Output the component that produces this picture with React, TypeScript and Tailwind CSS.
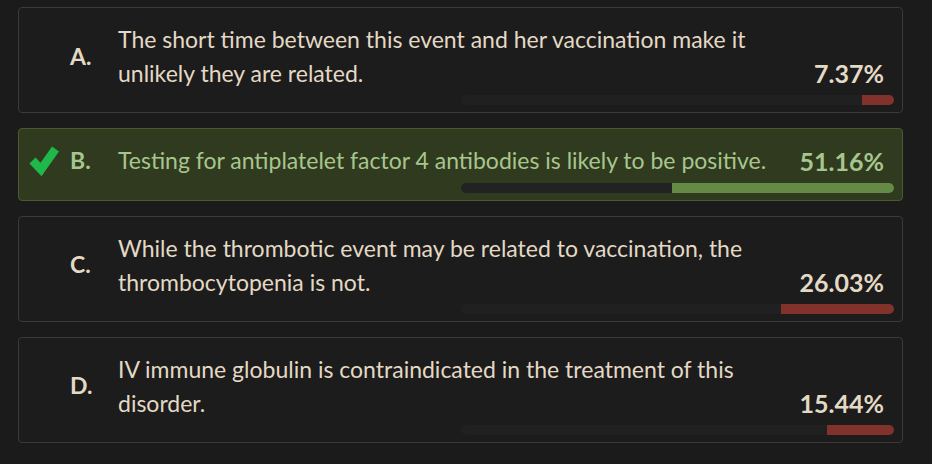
import { Fragment } from "react";

interface Choice {
  letter: string;
  text: string;
  pct: number;
  correct?: boolean;
}

const choices: Choice[] = [
  {
    letter: "A.",
    text: "The short time between this event and her vaccination make it unlikely they are related.",
    pct: 7.37,
  },
  {
    letter: "B.",
    text: "Testing for antiplatelet factor 4 antibodies is likely to be positive.",
    pct: 51.16,
    correct: true,
  },
  {
    letter: "C.",
    text: "While the thrombotic event may be related to vaccination, the thrombocytopenia is not.",
    pct: 26.03,
  },
  {
    letter: "D.",
    text: "IV immune globulin is contraindicated in the treatment of this disorder.",
    pct: 15.44,
  },
];

function Check() {
  return (
    <svg width="32" height="32" viewBox="0 0 32 32" className="overflow-visible">
      <path d="M5.5 16.5 L14 25.5 L28.5 5" fill="none" stroke="#1fb84a" strokeWidth="8.5" strokeLinejoin="miter" />
    </svg>
  );
}

function ChoiceCard({ c }: { c: Choice }) {
  const ok = c.correct;
  const tone = ok ? "text-[#a7c68d]" : "text-[#e3d9c5]";
  return (
    <div
      className={
        ok
          ? "rounded border border-[#4a5a2e] bg-[#303a1f] px-2 pt-[14px] pb-[7px]"
          : "rounded border border-[#3a3a3a] bg-[#1c1c1c] px-2 pt-[14px] pb-[7px]"
      }
    >
      <div className="flex">
        <div className="w-[39px] flex items-center">{ok && <Check />}</div>
        <div className={"w-[52px] flex items-center pl-1 font-bold text-[23px] " + tone}>{c.letter}</div>
        <div className={"flex-1 text-[23px] leading-[34px] pr-6 " + tone}>{c.text}</div>
        <div className={"self-end pr-[10px] font-bold text-[25px] leading-[34px] " + tone}>
          {c.pct.toFixed(2)}%
        </div>
      </div>
      <div className="flex justify-end mt-[5px]">
        <div className={"w-1/2 h-[10px] rounded-full overflow-hidden flex justify-end " + (ok ? "bg-[#222222]" : "bg-[#202020]")}>
          <div className={ok ? "h-full bg-[#648a46]" : "h-full bg-[#80322b]"} style={{ width: `${c.pct}%` }} />
        </div>
      </div>
    </div>
  );
}

export default function App() {
  return (
    <div
      className="w-[932px] h-[464px] bg-[#1b1b1b] pl-[18px] pt-[7px]"
      style={{ fontFamily: "Lato, 'Noto Sans', sans-serif" }}
    >
      <div className="w-[885px] flex flex-col gap-[15px]">
        {choices.map((c) => (
          <Fragment key={c.letter}>
            <ChoiceCard c={c} />
          </Fragment>
        ))}
      </div>
    </div>
  );
}
